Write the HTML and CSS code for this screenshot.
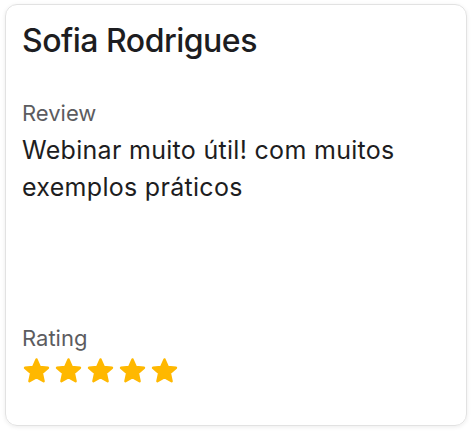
FILE: index.html
```html
<!DOCTYPE html>
<html lang="pt-br">
<head>
  <meta charset="UTF-8">
  <meta name="viewport" content="width=device-width, initial-scale=1.0">
  <title>Review</title>
  <link rel="stylesheet" href="styles.css">
</head>
<body>
  <div class="review-card">
    <div class="review-name">Sofia Rodrigues</div>
    <div class="review-block">
      <div class="review-label">Review</div>
      <div class="review-text">Webinar muito útil! com muitos exemplos práticos</div>
    </div>
    <div class="review-rating">
      <div class="review-label">Rating</div>
      <div class="stars">
        <svg class="star" viewBox="0 0 24 24"><polygon points="12,2.8 14.76,9 21.51,9.71 16.47,14.25 17.88,20.89 12,17.5 6.12,20.89 7.53,14.25 2.49,9.71 9.24,9"/></svg>
        <svg class="star" viewBox="0 0 24 24"><polygon points="12,2.8 14.76,9 21.51,9.71 16.47,14.25 17.88,20.89 12,17.5 6.12,20.89 7.53,14.25 2.49,9.71 9.24,9"/></svg>
        <svg class="star" viewBox="0 0 24 24"><polygon points="12,2.8 14.76,9 21.51,9.71 16.47,14.25 17.88,20.89 12,17.5 6.12,20.89 7.53,14.25 2.49,9.71 9.24,9"/></svg>
        <svg class="star" viewBox="0 0 24 24"><polygon points="12,2.8 14.76,9 21.51,9.71 16.47,14.25 17.88,20.89 12,17.5 6.12,20.89 7.53,14.25 2.49,9.71 9.24,9"/></svg>
        <svg class="star" viewBox="0 0 24 24"><polygon points="12,2.8 14.76,9 21.51,9.71 16.47,14.25 17.88,20.89 12,17.5 6.12,20.89 7.53,14.25 2.49,9.71 9.24,9"/></svg>
      </div>
    </div>
  </div>
</body>
</html>
```

FILE: styles.css
```css
body {
  background-color: #ffffff;
  color: #1d1d21;
  font-family: Inter, "Noto Sans", sans-serif;
  margin: 0;
  padding: 4px 7px 10px 5px;
}

.review-card {
  display: flex;
  flex-direction: column;
  height: 422px;
  box-sizing: border-box;
  padding: 16px 16px 0 16px;
  border: 1px solid #e2e2e2;
  border-radius: 12px;
  box-shadow: 0 1px 4px rgba(0, 0, 0, 0.08);
}

.review-name {
  font-size: 32px;
  font-weight: 500;
  line-height: 40px;
  letter-spacing: -0.5px;
}

.review-block {
  margin-top: 38px;
}

.review-label {
  font-size: 22px;
  color: #5c5c60;
  line-height: 28px;
}

.review-text {
  font-size: 25px;
  line-height: 37px;
  letter-spacing: 0.3px;
  margin-top: 5px;
}

.review-rating {
  margin-top: auto;
  margin-bottom: 40px;
}

.stars {
  display: flex;
  gap: 3px;
  margin-top: 4px;
}

.star {
  width: 29px;
  height: 29px;
  fill: #ffb800;
  stroke: #ffb800;
  stroke-width: 2;
  stroke-linejoin: round;
}
```
